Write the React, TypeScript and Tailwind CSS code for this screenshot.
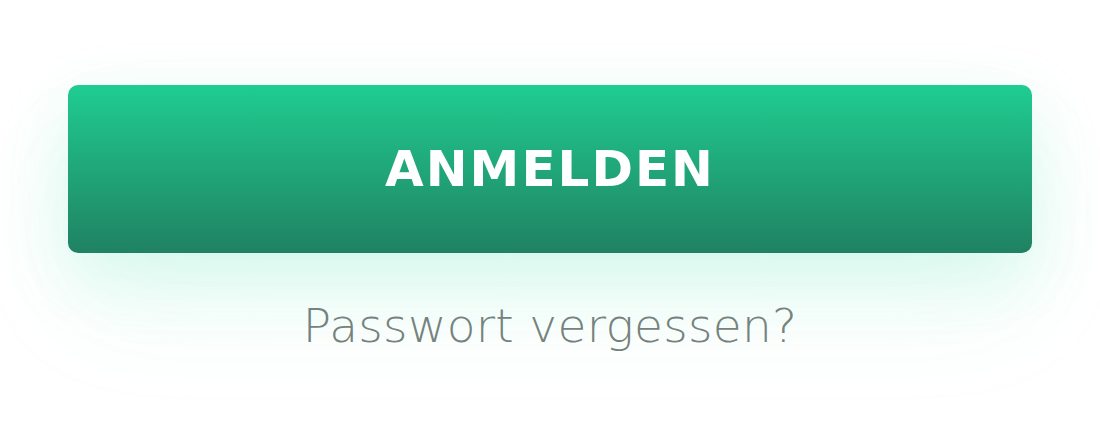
import React from "react";

export default function App() {
  return (
    <div className="w-[1100px] h-[426px] bg-white overflow-hidden flex flex-col items-center pt-[85px]">
      <div className="w-[964px] flex flex-col items-center">
        <button className="w-[964px] h-[168px] rounded-[10px] bg-gradient-to-b from-[#1ecd91] to-[#1f8262] shadow-[0_24px_70px_rgba(40,220,160,0.16),0_60px_120px_rgba(40,220,160,0.06)] flex items-center justify-center">
          <span
            className="text-white font-bold text-[50px] tracking-[2px] leading-none"
            style={{ fontFamily: '"DejaVu Sans", sans-serif' }}
          >
            ANMELDEN
          </span>
        </button>
        <div
          className="mt-[45px] text-[#75827d] text-[47px] tracking-[0.3px] font-extralight leading-[56px]"
          style={{ fontFamily: '"DejaVu Sans", sans-serif' }}
        >
          Passwort vergessen?
        </div>
      </div>
    </div>
  );
}
